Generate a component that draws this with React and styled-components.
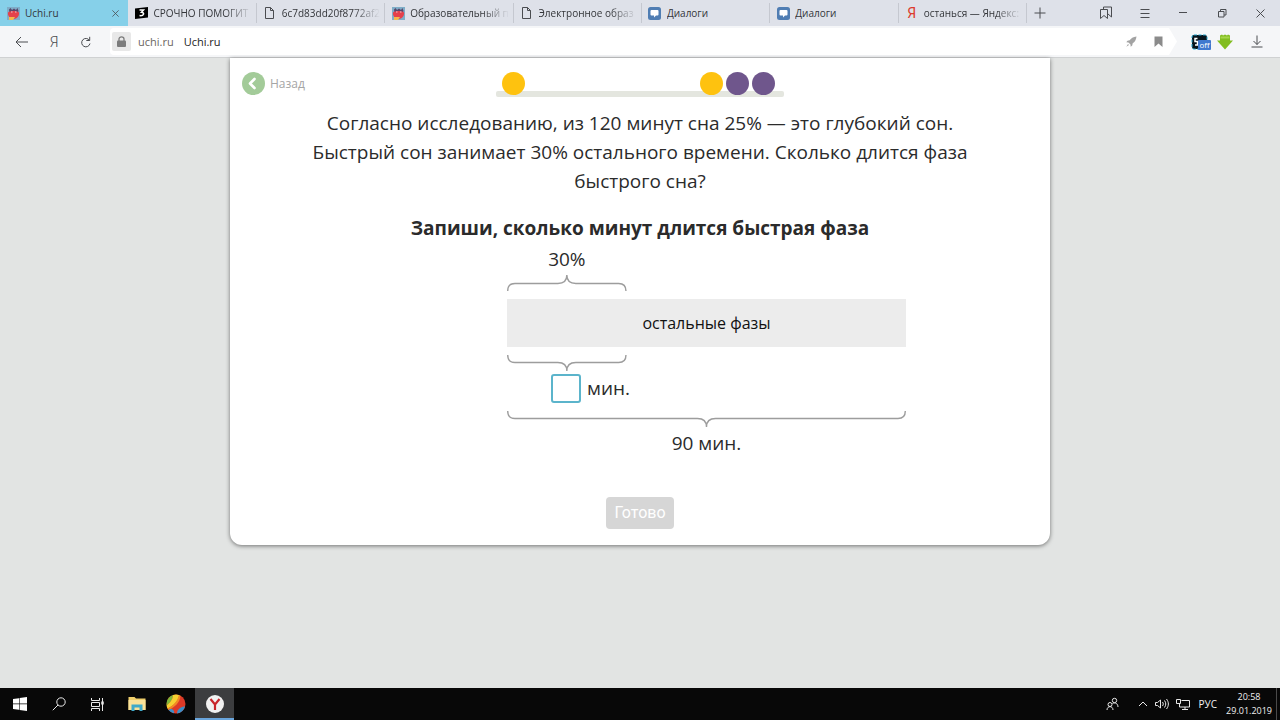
import React from "react"
import styled, { createGlobalStyle, css } from "styled-components"

export default function App() {
  return (
    <Desktop>
      <GlobalStyle />
      <TabStrip>
        <Tabs>
          {tabs.map((tab, i) => (
            <Tab key={i} $active={i === 0}>
              <TabIcon>{tab.icon}</TabIcon>
              <TabTitle $fade={tab.fade}>{tab.title}</TabTitle>
              {i === 0 && (
                <CloseTab aria-label="Закрыть">
                  <CrossIcon size={7} />
                </CloseTab>
              )}
            </Tab>
          ))}
        </Tabs>
        <NewTab aria-label="Новая вкладка">
          <Line width="12" height="12" viewBox="0 0 12 12">
            <path d="M6 0.5v11M0.5 6h11" />
          </Line>
        </NewTab>
        <WindowControls>
          <WindowButton aria-label="Коллекции">
            <Line width="14" height="14" viewBox="0 0 14 14">
              <path d="M1.5 3.5h7v9l-3.5-3-3.5 3zM4.5 3.5v-2.5h8v10l-3.5-3" />
            </Line>
          </WindowButton>
          <WindowButton aria-label="Меню">
            <Line width="10" height="10" viewBox="0 0 10 10">
              <path d="M0.5 1.5h9M0.5 5.5h9M0.5 9.5h9" />
            </Line>
          </WindowButton>
          <WindowButton aria-label="Свернуть">
            <Line width="8" height="8" viewBox="0 0 8 8">
              <path d="M0 3.5h8" />
            </Line>
          </WindowButton>
          <WindowButton aria-label="Развернуть">
            <Line width="10" height="10" viewBox="0 0 10 10">
              <path d="M1.5 3.5h5.5v5.5h-5.5zM3.5 3.5v-2h5.5v5.5h-2" />
            </Line>
          </WindowButton>
          <WindowButton aria-label="Закрыть">
            <CrossIcon size={9} />
          </WindowButton>
        </WindowControls>
      </TabStrip>

      <Toolbar>
        <NavButton aria-label="Назад">
          <Line width="14" height="12" viewBox="0 0 14 12">
            <path d="M13 6H1M6 1L1 6l5 5" />
          </Line>
        </NavButton>
        <NavButton>Я</NavButton>
        <NavButton aria-label="Обновить">
          <Line width="12" height="12" viewBox="0 0 12 12">
            <path d="M9.5 4.5A4.2 4.2 0 1 0 10 7.5M9.7 0.8v3.7H6.3" />
          </Line>
        </NavButton>
        <Address>
          <Lock>
            <svg width="9" height="11" viewBox="0 0 9 11">
              <rect y="4.5" width="9" height="6.5" rx="1" fill="#7c7c7c" />
              <path d="M2 5V3a2.5 2.2 0 0 1 5 0v2" fill="none" stroke="#7c7c7c" strokeWidth="1.3" />
            </svg>
          </Lock>
          <Host>uchi.ru</Host>
          <PageName>Uchi.ru</PageName>
          <AddressIcons>
            <svg width="11" height="11" viewBox="0 0 11 11" fill="#a3a3a3">
              <path d="M10.5 0.5C7 0.8 5 2.5 3.7 4.3L1.5 4.7 0.3 6.3l2.2 0.2 2 2 0.2 2.2 1.5-1.2 0.5-2.2C8.7 6 10.2 4 10.5 0.5zM2 8L0.3 10.7 3 9z" />
            </svg>
            <svg width="9" height="11" viewBox="0 0 9 11" fill="#8b8b8b">
              <path d="M0.5 0.5h8V11l-4-3.5L0.5 11z" />
            </svg>
          </AddressIcons>
        </Address>
        <Extensions>
          <ExtensionButton aria-label="Расширение">
            <svg width="20" height="16" viewBox="0 0 20 16">
              <rect x="1" y="1" width="15" height="14" rx="2" fill="#07131c" stroke="#22a5cf" strokeDasharray="3 1.5" />
              <path d="M6.5 4.5H4v3h2.5V11H4" fill="none" stroke="#fff" strokeWidth="1.5" />
              <rect x="7" y="6" width="13" height="10" rx="1" fill="#4079cf" />
              <text x="13.5" y="14" fontSize="8" fill="#fff" textAnchor="middle">off</text>
            </svg>
          </ExtensionButton>
          <ExtensionButton aria-label="Скачать видео">
            <svg width="16" height="16" viewBox="0 0 16 16">
              <path d="M3 1.5l2-1 1 1 2-1 2 1 1-1 2 1V6.5h3L8 15.5 0 6.5h3z" fill="#82bd20" />
              <path d="M3.5 2.5h9v2h-9z" fill="#a5d54a" />
            </svg>
          </ExtensionButton>
          <ExtensionButton aria-label="Загрузки">
            <Line width="12" height="13" viewBox="0 0 12 13">
              <path d="M6 0.5v9M2.5 6L6 9.5 9.5 6M0.5 12h11" />
            </Line>
          </ExtensionButton>
        </Extensions>
      </Toolbar>

      <Page>
        <Card>
          <CardHeader>
            <BackLink href="#back">
              <svg width="23" height="23" viewBox="0 0 23 23">
                <circle cx="11.5" cy="11.5" r="11.5" fill="#a3cb99" />
                <path d="M12.5 7l-4.5 4.5 4.5 4.5" fill="none" stroke="#fff" strokeWidth="2.6" strokeLinecap="round" strokeLinejoin="round" />
              </svg>
              Назад
            </BackLink>
            <Progress>
              <Balls>
                <Ball />
                <Remaining>
                  <Ball />
                  <Ball $purple />
                  <Ball $purple />
                </Remaining>
              </Balls>
              <Shelf />
            </Progress>
          </CardHeader>

          <Question>
            Согласно исследованию, из 120 минут сна 25% — это глубокий сон.
            Быстрый сон занимает 30% остального времени. Сколько длится фаза
            быстрого сна?
          </Question>
          <Task>Запиши, сколько минут длится быстрая фаза</Task>

          <Diagram>
            <Rest>
              <Share>
                <Caption>30%</Caption>
                <Brace width={120} up />
              </Share>
              <Bar>остальные фазы</Bar>
              <Share>
                <Brace width={120} />
              </Share>
              <Answer>
                <AnswerInput id="minutes" autoComplete="off" />
                <label htmlFor="minutes">мин.</label>
              </Answer>
              <Brace width={399} />
              <Caption>90 мин.</Caption>
            </Rest>
          </Diagram>

          <DoneButton>Готово</DoneButton>
        </Card>
      </Page>

      <Taskbar>
        <TaskButton aria-label="Пуск">
          <svg width="14" height="14" viewBox="0 0 14 14" fill="#fff">
            <path d="M0 2l6-0.8v5.4H0zM6.6 1.1L14 0v6.6H6.6zM0 7.2h6v5.5L0 11.9zM6.6 7.2H14V14l-7.4-1.1z" />
          </svg>
        </TaskButton>
        <TaskButton aria-label="Поиск">
          <Line $light width="14" height="14" viewBox="0 0 14 14">
            <circle cx="9" cy="5" r="4.2" />
            <path d="M6 8L0.8 13.2" />
          </Line>
        </TaskButton>
        <TaskButton aria-label="Представление задач">
          <Line $light width="15" height="13" viewBox="0 0 15 13">
            <path d="M1.5 0v2.5h8V0M1.5 4.5h8v4h-8zM1.5 13v-2.5h8V13M12.5 0v13" />
            <path d="M12.5 3.5v3" strokeWidth="2.5" />
          </Line>
        </TaskButton>
        <TaskButton aria-label="Проводник">
          <svg width="18" height="16" viewBox="0 0 18 16">
            <path d="M0.5 1h6l1.5 1.5h9.5V14h-17z" fill="#f0cf6c" />
            <path d="M0.5 4h17v10h-17z" fill="#fae29a" />
            <path d="M3.5 8.5h11V15h-3v-3.5h-5V15h-3z" fill="#3fa9c9" />
          </svg>
        </TaskButton>
        <TaskButton aria-label="Игры">
          <svg width="20" height="20" viewBox="0 0 20 20">
            <circle cx="10" cy="10" r="9.5" fill="#dd3a28" />
            <path d="M0.6 11.5A9.5 9.5 0 0 1 7 1C7 5 4 9 0.6 11.5z" fill="#7fb93b" />
            <path d="M7 1A9.5 9.5 0 0 1 13 1C13 7 7 12 1.5 14.5A9 9 0 0 1 0.6 11.5C4 9 7 5 7 1z" fill="#f6d131" />
            <path d="M1.5 14.5C7 12 11 8 13 1l1.5 0.7C14 9 8 13.5 2.5 16z" fill="#f28a25" />
            <path d="M2.5 16C6 13 9 17 8 19.3A9.5 9.5 0 0 1 2.5 16zM14 14c2-1.5 4-1.5 5-1.5A9.5 9.5 0 0 1 11 19.4C11 17 12 15.5 14 14z" fill="#3a8fc9" />
          </svg>
        </TaskButton>
        <TaskButton $active aria-label="Яндекс">
          <svg width="18" height="18" viewBox="0 0 18 18">
            <circle cx="9" cy="9" r="9" fill="#f1f1f1" />
            <path d="M4.5 4L9 9.5 13.5 4M9 9v6" fill="none" stroke="#c9252b" strokeWidth="2.2" />
          </svg>
        </TaskButton>
        <Tray>
          <Line $light width="13" height="14" viewBox="0 0 13 14">
            <circle cx="8.5" cy="3.5" r="2.2" />
            <circle cx="4" cy="7.5" r="2" />
            <path d="M1 13c0-4.5 6-4.5 6 0M6.5 6.5C9 5 12 6.5 12 10" />
          </Line>
          <TrayGroup>
            <Line $light width="10" height="6" viewBox="0 0 10 6">
              <path d="M1 5l4-4 4 4" />
            </Line>
            <Line $light width="14" height="12" viewBox="0 0 14 12">
              <path d="M0.5 4.5h2L5.5 2v8L2.5 7.5h-2zM7.5 4c1 1.5 1 2.5 0 4M9.5 2.5c1.7 2.5 1.7 4.5 0 7M11.5 1c2.5 3.5 2.5 6.5 0 10" />
            </Line>
            <Line $light width="14" height="12" viewBox="0 0 14 12">
              <path d="M5.5 2.5h8v6.5H3.5V6M0.5 1.5h4v4h-4zM9 9v2.5M6 11.5h6" />
            </Line>
          </TrayGroup>
          <span>РУС</span>
          <Clock>
            <span>20:58</span>
            <span>29.01.2019</span>
          </Clock>
        </Tray>
      </Taskbar>
    </Desktop>
  )
}

function Brace({ width, up }) {
  const mid = width / 2
  return (
    <BraceSvg viewBox={`0 0 ${width} 16`} $up={up} aria-hidden="true">
      <path
        d={`M0.7 0C0.7 5 3 7.5 8 7.5H${mid - 9}C${mid - 3} 7.5 ${mid} 10 ${mid} 16C${mid} 10 ${mid + 3} 7.5 ${mid + 9} 7.5H${width - 8}C${width - 3} 7.5 ${width - 0.7} 5 ${width - 0.7} 0`}
      />
    </BraceSvg>
  )
}

function CrossIcon({ size }) {
  return (
    <Line width={size} height={size} viewBox="0 0 9 9">
      <path d="M0.5 0.5l8 8M8.5 0.5l-8 8" />
    </Line>
  )
}

function MonsterIcon() {
  return (
    <svg width="13" height="13" viewBox="0 0 13 13">
      <rect width="13" height="13" fill="#7fadc8" />
      <path d="M2 2.5l1.5-1.5 1.5 2 2-1.5 2 1.5 1.5-2 1 3-1 2h-8z" fill="#59476b" />
      <path d="M1 5.5c2-2 9-2 11 0 0.5 3.5-2 6.5-5.5 6.5S0.5 9 1 5.5z" fill="#e5414b" />
      <path d="M2 10h6l-2 3H2z" fill="#f5b84b" />
      <path d="M4 5h1.5M8 5h1.5" stroke="#e9c8d0" />
    </svg>
  )
}

function FileIcon() {
  return (
    <Line width="9" height="12" viewBox="0 0 9 12">
      <path d="M0.5 0.5h5l3 3v8h-8zM5.5 0.5v3h3" />
    </Line>
  )
}

function DialogIcon() {
  return (
    <svg width="13" height="13" viewBox="0 0 13 13">
      <rect width="13" height="13" rx="2.5" fill="#4f7db3" />
      <path d="M3.5 3h6a1 1 0 0 1 1 1v3.5a1 1 0 0 1-1 1H8L6 10.5v-2H3.5a1 1 0 0 1-1-1V4a1 1 0 0 1 1-1z" fill="#fff" />
    </svg>
  )
}

function ZnanijaIcon() {
  return (
    <svg width="13" height="12" viewBox="0 0 13 12">
      <path d="M0 1.5L13 0v10.5L0 12z" fill="#000" />
      <path d="M4.5 3h4L6.5 5.3c3.5 0 2.5 4-2 3.2" fill="none" stroke="#fff" strokeWidth="1.5" />
    </svg>
  )
}

const GlobalStyle = createGlobalStyle`
  * {
    box-sizing: border-box;
  }
  body {
    margin: 0;
    font-family: "Open Sans", "Noto Sans", sans-serif;
    color: #2b2b2b;
  }
  button {
    display: flex;
    align-items: center;
    justify-content: center;
    padding: 0;
    border: 0;
    background: none;
    font: inherit;
    color: inherit;
  }
  svg {
    display: block;
    flex: none;
  }
`

const Desktop = styled.div`
  display: flex;
  flex-direction: column;
  min-height: 100vh;
  background: #e2e4e3;
`
const Line = styled.svg`
  fill: none;
  stroke: ${(p) => (p.$light ? "#e8e8e8" : "#4a4c50")};
  stroke-width: 1;
`

const TabStrip = styled.header`
  display: flex;
  height: 26px;
  background: #dee1e9;
`
const Tabs = styled.div`
  display: flex;
  flex: 1;
  min-width: 0;
`
const Tab = styled.div`
  display: flex;
  flex: 1;
  align-items: center;
  gap: 5px;
  min-width: 0;
  padding: 0 2px 0 6px;
  font-size: 10px;
  color: #333539;
  background: ${(p) => (p.$active ? "#86d0e9" : "linear-gradient(#c5c8d0, #c5c8d0) right center / 1px 20px no-repeat")};
`
const TabIcon = styled.span`
  display: flex;
  justify-content: center;
  width: 14px;
`
const TabTitle = styled.span`
  flex: 1;
  overflow: hidden;
  white-space: nowrap;
  ${(p) =>
    p.$fade &&
    css`
      mask-image: linear-gradient(90deg, #000 calc(100% - 30px), transparent calc(100% - 3px));
    `}
`
const YandexLetter = styled.span`
  font: 14px Roboto, sans-serif;
  color: #dc3b2c;
`
const CloseTab = styled.button`
  width: 10px;
  height: 10px;
  margin-right: 6px;
`
const NewTab = styled.button`
  width: 26px;
  margin-right: 34px;
`
const WindowControls = styled.div`
  display: flex;
  width: 193px;
`
const WindowButton = styled.button`
  flex: 1;
`

const Toolbar = styled.nav`
  display: flex;
  align-items: center;
  height: 32px;
  padding-left: 6px;
  background: #f5f6f8;
  border-bottom: 1px solid #cfd1d2;
`
const NavButton = styled.button`
  width: 32px;
  height: 28px;
  font-family: Roboto, sans-serif;
  font-size: 14px;
  font-weight: 300;
  color: #4a4c50;
`
const Address = styled.div`
  display: flex;
  flex: 1;
  align-items: center;
  height: 27px;
  margin-left: 8px;
  font-size: 11px;
  background: #fff;
  border-radius: 4px;
  clip-path: polygon(0 0, calc(100% - 8px) 0, 100% 50%, calc(100% - 8px) 100%, 0 100%);
`
const Lock = styled.span`
  display: flex;
  align-items: center;
  justify-content: center;
  width: 19px;
  height: 19px;
  margin: 0 7px 0 2px;
  background: #e8e8e8;
  border-radius: 2px;
`
const Host = styled.span`
  margin-right: 10px;
  color: #6b6660;
`
const PageName = styled.span`
  color: #222;
`
const AddressIcons = styled.div`
  display: flex;
  gap: 17px;
  margin-left: auto;
  padding-right: 14px;
`
const Extensions = styled.div`
  display: flex;
  align-items: center;
  gap: 6px;
  padding: 0 17px 0 14px;
`
const ExtensionButton = styled.button`
  height: 28px;

  &:last-child {
    margin-left: 12px;
  }
`

const Page = styled.main`
  flex: 1;
`
const Card = styled.section`
  display: flex;
  flex-direction: column;
  align-items: center;
  max-width: 820px;
  margin: 0 auto;
  padding: 14px 12px 16px;
  background: #fff;
  border-radius: 0 0 12px 12px;
  box-shadow: 0 1px 4px rgba(0, 0, 0, 0.5);
`
const CardHeader = styled.div`
  display: grid;
  grid-template-columns: 1fr minmax(0, 288px) 1fr;
  align-items: start;
  width: 100%;
`
const BackLink = styled.a`
  display: flex;
  align-items: center;
  gap: 5px;
  font-size: 12px;
  line-height: 23px;
  color: #a5a5a5;
  text-decoration: none;
`
const Progress = styled.div`
  grid-column: 2;
`
const Balls = styled.div`
  position: relative;
  z-index: 1;
  display: flex;
  justify-content: space-between;
  padding: 0 9px 0 6px;
`
const Remaining = styled.div`
  display: flex;
  gap: 3px;
`
const Ball = styled.span`
  width: 23px;
  height: 23px;
  border-radius: 50%;
  background: ${(p) => (p.$purple ? "#6f568c" : "#fec20f")};
`
const Shelf = styled.div`
  height: 6px;
  margin-top: -4px;
  background: #e4e6df;
  border-radius: 2px;
`
const Question = styled.p`
  max-width: 680px;
  margin: 12px 0 18px;
  font-size: 19px;
  line-height: 29px;
  text-align: center;
`
const Task = styled.h1`
  margin: 0;
  font-size: 19px;
  line-height: 29px;
  text-align: center;
`

const Diagram = styled.div`
  width: 100%;
  max-width: 532px;
`
const Rest = styled.div`
  width: 75%;
  margin-left: 25%;
`
const Share = styled.div`
  width: 30%;
`
const Caption = styled.div`
  font-size: 19px;
  line-height: 32px;
  text-align: center;
`
const BraceSvg = styled.svg`
  width: 100%;
  fill: none;
  stroke: #9d9d9d;
  stroke-width: 1.4;
  ${(p) =>
    p.$up &&
    css`
      transform: scaleY(-1);
    `}
`
const Bar = styled.div`
  margin: 8px 0;
  font-size: 16px;
  line-height: 48px;
  text-align: center;
  color: #111;
  background: #ececec;
`
const Answer = styled.div`
  display: flex;
  align-items: center;
  gap: 6px;
  margin: 3px 0 8px;
  padding-left: 44px;
  font-size: 19px;
  line-height: 29px;
`
const AnswerInput = styled.input`
  width: 30px;
  height: 29px;
  padding: 0 4px;
  font: inherit;
  text-align: center;
  background: #fff;
  border: 2px solid #5bb4cb;
  border-radius: 3px;
`
const DoneButton = styled.button`
  height: 32px;
  margin-top: 38px;
  padding: 0 8px;
  font-family: Roboto, sans-serif;
  font-size: 16px;
  color: #fff;
  background: #d6d6d6;
  border-radius: 4px;
`

const Taskbar = styled.footer`
  display: flex;
  height: 32px;
  color: #f0f0f0;
  background: #080808;
`
const TaskButton = styled.button`
  width: 39px;
  ${(p) =>
    p.$active &&
    css`
      background: #3c3d3f;
      box-shadow: inset 0 -2px #69a5dc;
    `}
`
const Tray = styled.div`
  display: flex;
  align-items: center;
  gap: 9px;
  margin-left: auto;
  margin-right: 3px;
  padding-right: 4px;
  font-size: 10px;
  border-right: 1px solid #4a4a4a;
`
const TrayGroup = styled.div`
  display: flex;
  align-items: center;
  gap: 7px;
  margin-left: 10px;
`
const Clock = styled.div`
  display: flex;
  flex-direction: column;
  align-items: center;
  font-size: 9px;
  line-height: 14px;
`

const tabs = [
  { icon: <MonsterIcon />, title: "Uchi.ru" },
  { icon: <ZnanijaIcon />, title: "СРОЧНО ПОМОГИТ", fade: true },
  { icon: <FileIcon />, title: "6c7d83dd20f8772af2", fade: true },
  { icon: <MonsterIcon />, title: "Образовательный п", fade: true },
  { icon: <FileIcon />, title: "Электронное образ", fade: true },
  { icon: <DialogIcon />, title: "Диалоги" },
  { icon: <DialogIcon />, title: "Диалоги" },
  { icon: <YandexLetter>Я</YandexLetter>, title: "останься — Яндекс:", fade: true },
]
